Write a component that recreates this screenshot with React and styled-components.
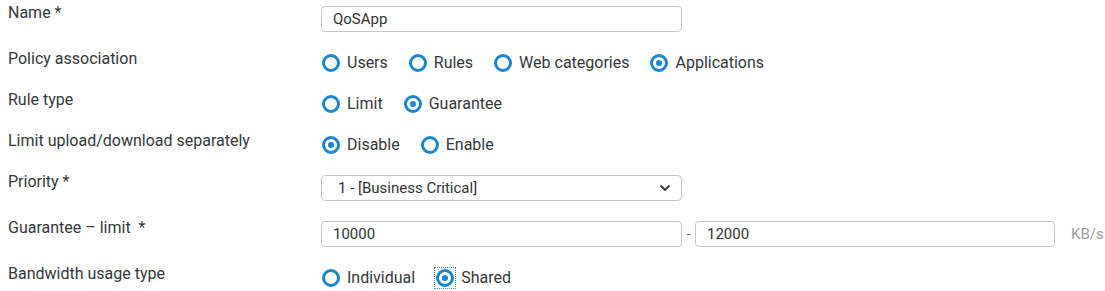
import styled, { createGlobalStyle } from "styled-components";

const GlobalStyle = createGlobalStyle`
  body {
    margin: 0;
    background: #ffffff;
    font-family: Roboto, "Liberation Sans", sans-serif;
    color: #333639;
  }
`;

const Form = styled.div`
  padding: 3px 0 0 8px;
  width: 1097px;
`;

const Row = styled.div`
  display: flex;
  align-items: flex-start;
  padding-bottom: 17px;
`;

const Label = styled.div`
  width: 313px;
  flex: none;
  font-size: 16px;
  line-height: 20px;
  color: #35383c;
`;

const Control = styled.div`
  margin-top: 3px;
  display: flex;
  align-items: center;
  flex: 1;
`;

const TextBox = styled.div`
  box-sizing: border-box;
  width: ${(p) => p.$w || 361}px;
  height: 26px;
  border: 1px solid #c3c6cb;
  border-radius: 4px;
  padding-left: ${(p) => p.$pad || 11}px;
  font-size: 15px;
  line-height: 24px;
  color: #333;
  display: flex;
  align-items: center;
  justify-content: space-between;
  padding-right: 10px;
`;

const Dash = styled.span`
  width: 13px;
  text-align: center;
  font-size: 15px;
  color: #666;
`;

const Unit = styled.span`
  margin-left: 16px;
  font-size: 15px;
  color: #9a9da1;
`;

const RadioGroup = styled.div`
  display: flex;
  align-items: center;
  height: 21px;
`;

const RadioItem = styled.label`
  display: flex;
  align-items: center;
  margin-right: 20px;
  font-size: 16px;
  color: #35383c;
  white-space: nowrap;
`;

const RadioWrap = styled.span`
  box-sizing: border-box;
  width: 22px;
  height: 22px;
  margin: 0 5px 0 -1px;
  display: flex;
  align-items: center;
  justify-content: center;
  border: 1px dotted ${(p) => (p.$focus ? "#4a8fd6" : "transparent")};
`;

const Circle = styled.span`
  box-sizing: border-box;
  width: 18px;
  height: 18px;
  border-radius: 50%;
  border: 3px solid #1a86cf;
  display: flex;
  align-items: center;
  justify-content: center;
  &::after {
    content: "";
    width: 6px;
    height: 6px;
    border-radius: 50%;
    background: ${(p) => (p.$on ? "#1a86cf" : "transparent")};
  }
`;

const Chevron = () => (
  <svg width="12" height="8" viewBox="0 0 12 8">
    <path d="M1.5 1.5 L6 6 L10.5 1.5" fill="none" stroke="#333" strokeWidth="1.8" />
  </svg>
);

function Radios({ options, value, focus }) {
  return (
    <RadioGroup>
      {options.map((o) => (
        <RadioItem key={o}>
          <RadioWrap $focus={focus === o}>
            <Circle $on={value === o} />
          </RadioWrap>
          {o}
        </RadioItem>
      ))}
    </RadioGroup>
  );
}

export default function App() {
  return (
    <>
      <GlobalStyle />
      <Form>
        <Row>
          <Label>Name *</Label>
          <Control>
            <TextBox>QoSApp</TextBox>
          </Control>
        </Row>
        <Row>
          <Label>Policy association</Label>
          <Control>
            <Radios
              options={["Users", "Rules", "Web categories", "Applications"]}
              value="Applications"
            />
          </Control>
        </Row>
        <Row>
          <Label>Rule type</Label>
          <Control>
            <Radios options={["Limit", "Guarantee"]} value="Guarantee" />
          </Control>
        </Row>
        <Row>
          <Label>Limit upload/download separately</Label>
          <Control>
            <Radios options={["Disable", "Enable"]} value="Disable" />
          </Control>
        </Row>
        <Row>
          <Label>Priority *</Label>
          <Control>
            <TextBox $pad={16}>
              1 - [Business Critical]
              <Chevron />
            </TextBox>
          </Control>
        </Row>
        <Row>
          <Label>Guarantee – limit &nbsp;*</Label>
          <Control>
            <TextBox>10000</TextBox>
            <Dash>-</Dash>
            <TextBox $w={360}>12000</TextBox>
            <Unit>KB/s</Unit>
          </Control>
        </Row>
        <Row>
          <Label>Bandwidth usage type</Label>
          <Control>
            <Radios options={["Individual", "Shared"]} value="Shared" focus="Shared" />
          </Control>
        </Row>
      </Form>
    </>
  );
}
